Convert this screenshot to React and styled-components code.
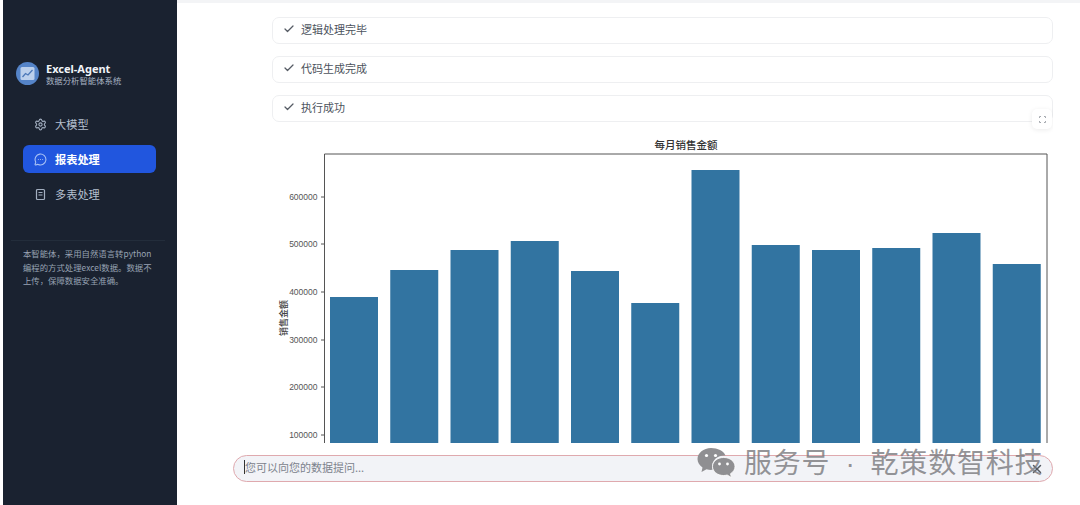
import styled, { createGlobalStyle } from "styled-components"
import { Settings, MessageCircleMore, Check, X } from "lucide-react"

const GlobalStyle = createGlobalStyle`
  html, body {
    margin: 0;
    height: 505px;
    overflow: hidden;
    background: #fff;
    font-family: "Noto Sans CJK SC", "Noto Sans", sans-serif;
  }
`

const Page = styled.div`
  display: flex;
  width: 1080px;
  height: 505px;
  padding-left: 3px;
  box-sizing: border-box;
  overflow: hidden;
  position: relative;
`

const Sidebar = styled.aside`
  width: 174px;
  flex: none;
  background: #1a2230;
  padding: 62px 0 0;
  box-sizing: border-box;
`

const Brand = styled.div`
  display: flex;
  align-items: center;
  gap: 7px;
  padding-left: 13px;
`

const Logo = styled.div`
  width: 23px;
  height: 23px;
  border-radius: 50%;
  background: #5584c8;
  display: flex;
  align-items: center;
  justify-content: center;
`

const BrandText = styled.div`
  display: flex;
  flex-direction: column;
`

const BrandName = styled.div`
  font: 700 11px/13px "Noto Sans", sans-serif;
  color: #f1f4f8;
`

const BrandSub = styled.div`
  font-size: 8.4px;
  line-height: 10px;
  color: #a9b4c4;
`

const Nav = styled.nav`
  display: flex;
  flex-direction: column;
  gap: 7px;
  margin: 25px 21px 0 20px;
`

const NavItem = styled.div`
  height: 28px;
  border-radius: 6px;
  display: flex;
  align-items: center;
  gap: 8px;
  padding-left: 11px;
  font-size: 11.2px;
  font-weight: ${p => (p.$active ? 700 : 400)};
  color: ${p => (p.$active ? "#fff" : "#b4bfce")};
  background: ${p => (p.$active ? "#2156de" : "transparent")};
  svg {
    color: ${p => (p.$active ? "#a9c2f5" : "#a3afc0")};
  }
`

const About = styled.p`
  margin: 32px 12px 0 8px;
  padding: 6px 11px 0 12px;
  border-top: 1px solid #232d3b;
  font-size: 8.4px;
  line-height: 13.5px;
  color: #98a3b3;
`

const Main = styled.main`
  flex: 1;
  min-width: 0;
  display: flex;
  flex-direction: column;
  border-top: 3px solid #f3f4f6;
`

const Thread = styled.section`
  position: relative;
  height: 426px;
  margin: 14px 27px 0 95px;
  display: flex;
  flex-direction: column;
  overflow: hidden;
`

const StatusCard = styled.div`
  height: 27px;
  flex: none;
  margin-bottom: 12px;
  padding: 0 0 3px 10px;
  box-sizing: border-box;
  border: 1px solid #eeeff1;
  border-radius: 7px;
  display: flex;
  align-items: center;
  gap: 6px;
  font-size: 11px;
  color: #4c535d;
  svg {
    color: #555b64;
  }
`

const ExpandButton = styled.div`
  position: absolute;
  top: 92px;
  right: 1px;
  width: 20px;
  height: 20px;
  border-radius: 5px;
  background: #fff;
  box-shadow: 0 1px 5px rgba(0, 0, 0, 0.08);
  display: flex;
  align-items: center;
  justify-content: center;
`

const ChartBox = styled.figure`
  margin: 0;
  flex: none;
  height: 309px;
  svg {
    display: block;
  }
`

const InputBar = styled.div`
  height: 27px;
  margin: 12px 27px 0 56px;
  box-sizing: border-box;
  border: 1px solid #dfa9ae;
  border-radius: 14px;
  background: #f2f3f7;
  display: flex;
  align-items: center;
  justify-content: space-between;
  padding: 0 8px 3px 10px;
  font-size: 11px;
  color: #7c828c;
  svg {
    color: #555b64;
    margin-top: 3px;
  }
`

const Prompt = styled.span`
  border-left: 1px solid #333;
  line-height: 14px;
`

const Watermark = styled.div`
  position: absolute;
  left: 696px;
  top: 443px;
  display: flex;
  align-items: center;
  gap: 8px;
  font-size: 28px;
  line-height: 36px;
  letter-spacing: 0.8px;
  white-space: nowrap;
  color: rgba(120, 120, 124, 0.78);
`

const WatermarkDot = styled.span`
  margin: 0 15px;
  font-family: "Liberation Sans", sans-serif;
`

const sales = [297, 270, 250, 241, 271, 303, 170, 245, 250, 248, 233, 264]
const ticks = [
  ["600000", 63],
  ["500000", 110],
  ["400000", 158],
  ["300000", 206],
  ["200000", 253],
  ["100000", 301],
]

function SalesChart() {
  return (
    <ChartBox>
      <svg width="781" height="309" viewBox="0 0 781 309">
        <text x="414" y="15" textAnchor="middle" fontSize="10.5" fontWeight="500" fill="#333">每月销售金额</text>
        <path d="M52.500 309V20H775V309" fill="none" stroke="#555" strokeWidth="1" />
        {ticks.map(([label, y]) => (
          <g key={label}>
            <path d={`M49 ${y}H52`} stroke="#555" strokeWidth="1" />
            <text x="45.500" y={y + 3} textAnchor="end" fontSize="8.500" fill="#555" fontFamily="Liberation Sans, sans-serif">{label}</text>
          </g>
        ))}
        <text transform="translate(15 184) rotate(-90)" textAnchor="middle" fontSize="9" fontWeight="500" fill="#444">销售金额</text>
        {sales.map((top, i) => (
          <rect key={i} x={58 + i * 60.25} y={top - 134} width="48" height={443 - top} fill="#3274a1" />
        ))}
      </svg>
    </ChartBox>
  )
}

export default function App() {
  return (
    <Page>
      <GlobalStyle />
      <Sidebar>
        <Brand>
          <Logo>
            <svg width="15" height="15" viewBox="0 0 15 15" fill="none">
              <rect x="0.5" y="1" width="14" height="13" rx="1.500" fill="#bcd0ec" />
              <path d="M2.500 11l3-3.500 2.500 1.500 4.500-5" stroke="#4c78b8" strokeWidth="1.300" />
            </svg>
          </Logo>
          <BrandText>
            <BrandName>Excel-Agent</BrandName>
            <BrandSub>数据分析智能体系统</BrandSub>
          </BrandText>
        </Brand>
        <Nav>
          <NavItem><Settings size={13} />大模型</NavItem>
          <NavItem $active><MessageCircleMore size={13} />报表处理</NavItem>
          <NavItem>
            <svg width="13" height="13" viewBox="0 0 13 13" fill="none" stroke="currentColor" strokeWidth="1.200">
              <rect x="2.500" y="1.500" width="8" height="10" rx="1" />
              <path d="M4.500 4.500h4M4.500 7h4" />
            </svg>
            多表处理
          </NavItem>
        </Nav>
        <About>本智能体，采用自然语言转python编程的方式处理excel数据。数据不上传，保障数据安全准确。</About>
      </Sidebar>
      <Main>
        <Thread>
          <StatusCard><Check size={12} strokeWidth={2.500} />逻辑处理完毕</StatusCard>
          <StatusCard><Check size={12} strokeWidth={2.500} />代码生成完成</StatusCard>
          <StatusCard><Check size={12} strokeWidth={2.500} />执行成功</StatusCard>
          <ExpandButton>
            <svg width="7" height="7" viewBox="0 0 7 7" fill="none" stroke="#a5a9af" strokeWidth="1">
              <path d="M.5 2V.5H2M5 .5h1.500V2M6.500 5v1.500H5M2 6.500H.5V5" />
            </svg>
          </ExpandButton>
          <SalesChart />
        </Thread>
        <InputBar>
          <Prompt>您可以向您的数据提问...</Prompt>
          <X size={14} strokeWidth={2.500} />
        </InputBar>
      </Main>
      <Watermark>
        <svg width="40" height="34" viewBox="0 0 40 34">
          <path d="M15 2C7.500 2 1.500 7 1.500 13c0 3.500 2 6.500 5 8.500L5.500 26l5-2.700c1.500.4 3 .6 4.500.6.600 0 1.200 0 1.700-.1-.4-1.200-.6-2.400-.6-3.600 0-6 5.500-10.700 12.400-10.700h1C27.500 4.800 21.800 2 15 2z" fill="#8f8f92" />
          <path d="M27.500 11.500c-6 0-11 4-11 9s5 9 11 9c1.300 0 2.500-.2 3.700-.5l4.300 2.500-1-3.800c2.900-1.700 4.500-4.300 4.500-7.200 0-5-5-9-11-9z" fill="#8f8f92" stroke="#fff" strokeWidth="0.800" />
          <circle cx="10.500" cy="9.500" r="1.600" fill="#fff" />
          <circle cx="19.500" cy="9.500" r="1.600" fill="#fff" />
          <circle cx="23.500" cy="18" r="1.400" fill="#fff" />
          <circle cx="31.500" cy="18" r="1.400" fill="#fff" />
        </svg>
        <span>服务号<WatermarkDot>·</WatermarkDot>乾策数智科技</span>
      </Watermark>
    </Page>
  )
}
